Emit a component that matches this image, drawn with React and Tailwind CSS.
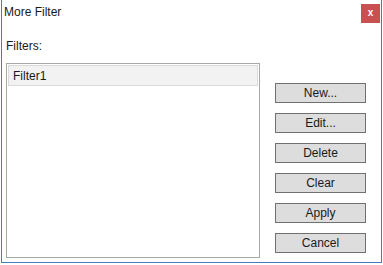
export default function App() {
  const buttons = ["New...", "Edit...", "Delete", "Clear", "Apply", "Cancel"];
  return (
    <div className="w-[383px] h-[265px] bg-white" style={{ fontFamily: '"Liberation Sans", Arial, sans-serif' }}>
      <div className="ml-[1px] w-[381px] h-[263px] border-l border-r border-b border-[#4a78c2] flex flex-col text-[12px] text-[#1a1a1a]">
        <div className="flex justify-between items-start h-[38px]">
          <div className="pl-[2px] pt-[4px] leading-4">More Filter</div>
          <div className="mt-[4px] mr-[1px] w-[19px] h-[19px] bg-[#c75050] text-white text-[10px] font-bold leading-none flex items-center justify-center pb-[1px]">x</div>
        </div>
        <div className="flex pl-[4px]">
          <div className="flex flex-col">
            <div className="leading-4 h-[25px]">Filters:</div>
            <div className="w-[254px] h-[195px] border border-[#a8a8a8] p-[1px]">
              <div className="h-[21px] border border-[#dadada] bg-[#f2f2f2] flex items-center pl-[4px] leading-4">Filter1</div>
            </div>
          </div>
          <div className="flex flex-col gap-[10px] pt-[45px] ml-[15px]">
            {buttons.map((b) => (
              <div key={b} className="w-[91px] h-[20px] border border-[#707070] bg-[#dddddd] flex items-center justify-center leading-4">
                {b}
              </div>
            ))}
          </div>
        </div>
      </div>
    </div>
  );
}
